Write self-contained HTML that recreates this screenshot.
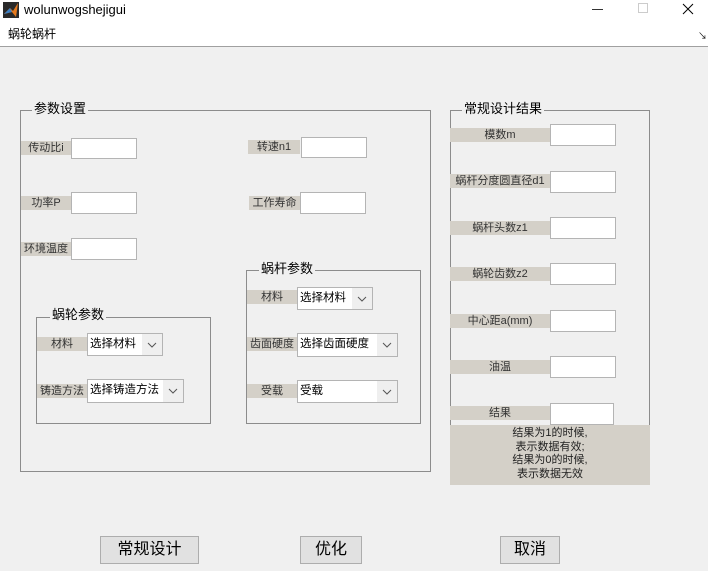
<!DOCTYPE html>
<html><head><meta charset="utf-8"><style>
*{margin:0;padding:0;box-sizing:border-box}
body{width:708px;height:571px;background:#f0f0f0;position:relative;overflow:hidden;font-family:"Liberation Sans","Noto Sans CJK SC",sans-serif;font-size:12px;color:#000}
.a{position:absolute}
.lb{position:absolute;background:#d4d0c8;height:14px;line-height:14px;font-size:11px;text-align:center;color:#333;white-space:nowrap}
.in{position:absolute;background:#fff;border:1px solid #b4b4b4}
.pn{position:absolute;border:1px solid #8c8c8c}
.pt{position:absolute;background:#f0f0f0;font-size:13px;padding:0 2px;line-height:16px;white-space:nowrap}
.dd{position:absolute;background:#fff;border:1px solid #b4b4b4;font-size:11.5px;line-height:20px;padding-left:2px;white-space:nowrap}
.dd .ar{position:absolute;right:0;top:0;bottom:0;width:20px;background:#efefef}
.bt{position:absolute;background:#e1e1e1;border:1px solid #adadad;font-size:16px;text-align:center;line-height:25px}
</style></head><body>
<div class="a" style="left:0;top:0;width:708px;height:47px;background:#fff;border-bottom:1px solid #a0a0a0"></div>
<svg class="a" style="left:3px;top:2px" width="16" height="16" viewBox="0 0 16 16"><rect width="16" height="16" fill="#2a2a2a"/><path d="M1 12 L7 6 L10 9 L15 1 L13 15 L9 10 Z" fill="#e67a1e"/><path d="M1 12 L7 6 L9 10 Z" fill="#3b7fc4"/></svg>
<div class="a" style="left:24px;top:1px;font-size:13px;line-height:18px">wolunwogshejigui</div>
<div class="a" style="left:592px;top:9px;width:11px;height:1px;background:#333"></div>
<div class="a" style="left:638px;top:3px;width:10px;height:10px;border:1px solid #ccc"></div>
<svg class="a" style="left:682px;top:3px" width="12" height="12"><path d="M1 1 L11 11 M11 1 L1 11" stroke="#000" stroke-width="1"/></svg>
<div class="a" style="left:8px;top:26px;font-size:12px;line-height:16px">蜗轮蜗杆</div>
<div class="a" style="left:698px;top:29px;font-size:9px">↘</div>

<div class="pn" style="left:20px;top:110px;width:411px;height:362px"></div>
<div class="pt" style="left:32px;top:101px">参数设置</div>
<div class="lb" style="left:21px;top:141px;width:50px">传动比i</div><div class="in" style="left:71px;top:138px;width:66px;height:21px"></div>
<div class="lb" style="left:248px;top:140px;width:52px">转速n1</div><div class="in" style="left:301px;top:137px;width:66px;height:21px"></div>
<div class="lb" style="left:21px;top:196px;width:50px">功率P</div><div class="in" style="left:71px;top:192px;width:66px;height:22px"></div>
<div class="lb" style="left:249px;top:196px;width:51px">工作寿命</div><div class="in" style="left:300px;top:192px;width:66px;height:22px"></div>
<div class="lb" style="left:21px;top:242px;width:50px">环境温度</div><div class="in" style="left:71px;top:238px;width:66px;height:22px"></div>

<div class="pn" style="left:36px;top:317px;width:175px;height:107px"></div>
<div class="pt" style="left:50px;top:307px">蜗轮参数</div>
<div class="lb" style="left:37px;top:337px;width:50px">材料</div>
<div class="dd" style="left:87px;top:333px;width:76px;height:23px">选择材料<div class="ar"><svg width="20" height="21"><path d="M6 9 L10 13 L14 9" stroke="#555" fill="none"/></svg></div></div>
<div class="lb" style="left:37px;top:384px;width:50px">铸造方法</div>
<div class="dd" style="left:87px;top:379px;width:97px;height:24px">选择铸造方法<div class="ar"><svg width="20" height="22"><path d="M6 9 L10 13 L14 9" stroke="#555" fill="none"/></svg></div></div>

<div class="pn" style="left:246px;top:270px;width:175px;height:154px"></div>
<div class="pt" style="left:259px;top:261px">蜗杆参数</div>
<div class="lb" style="left:247px;top:290px;width:50px">材料</div>
<div class="dd" style="left:297px;top:287px;width:76px;height:23px">选择材料<div class="ar"><svg width="20" height="21"><path d="M6 9 L10 13 L14 9" stroke="#555" fill="none"/></svg></div></div>
<div class="lb" style="left:247px;top:337px;width:50px">齿面硬度</div>
<div class="dd" style="left:297px;top:333px;width:101px;height:24px">选择齿面硬度<div class="ar"><svg width="20" height="22"><path d="M6 9 L10 13 L14 9" stroke="#555" fill="none"/></svg></div></div>
<div class="lb" style="left:247px;top:384px;width:50px">受载</div>
<div class="dd" style="left:297px;top:380px;width:101px;height:23px">受载<div class="ar"><svg width="20" height="21"><path d="M6 9 L10 13 L14 9" stroke="#555" fill="none"/></svg></div></div>

<div class="pn" style="left:450px;top:110px;width:200px;height:318px"></div>
<div class="pt" style="left:462px;top:101px">常规设计结果</div>
<div class="lb" style="left:450px;top:128px;width:100px">模数m</div><div class="in" style="left:550px;top:124px;width:66px;height:22px"></div>
<div class="lb" style="left:450px;top:174px;width:100px">蜗杆分度圆直径d1</div><div class="in" style="left:550px;top:171px;width:66px;height:22px"></div>
<div class="lb" style="left:450px;top:221px;width:100px">蜗杆头数z1</div><div class="in" style="left:550px;top:217px;width:66px;height:22px"></div>
<div class="lb" style="left:450px;top:267px;width:100px">蜗轮齿数z2</div><div class="in" style="left:550px;top:263px;width:66px;height:22px"></div>
<div class="lb" style="left:450px;top:314px;width:100px">中心距a(mm)</div><div class="in" style="left:550px;top:310px;width:66px;height:22px"></div>
<div class="lb" style="left:450px;top:360px;width:100px">油温</div><div class="in" style="left:550px;top:356px;width:66px;height:22px"></div>
<div class="lb" style="left:450px;top:406px;width:100px">结果</div><div class="in" style="left:550px;top:403px;width:64px;height:22px"></div>
<div class="a" style="left:450px;top:425px;width:200px;height:60px;background:#d4d0c8;font-size:11px;line-height:13.5px;text-align:center;padding-top:2px;color:#222">结果为1的时候,<br>表示数据有效;<br>结果为0的时候,<br>表示数据无效</div>

<div class="bt" style="left:100px;top:536px;width:99px;height:28px">常规设计</div>
<div class="bt" style="left:300px;top:536px;width:62px;height:28px">优化</div>
<div class="bt" style="left:500px;top:536px;width:60px;height:28px">取消</div>
</body></html>
